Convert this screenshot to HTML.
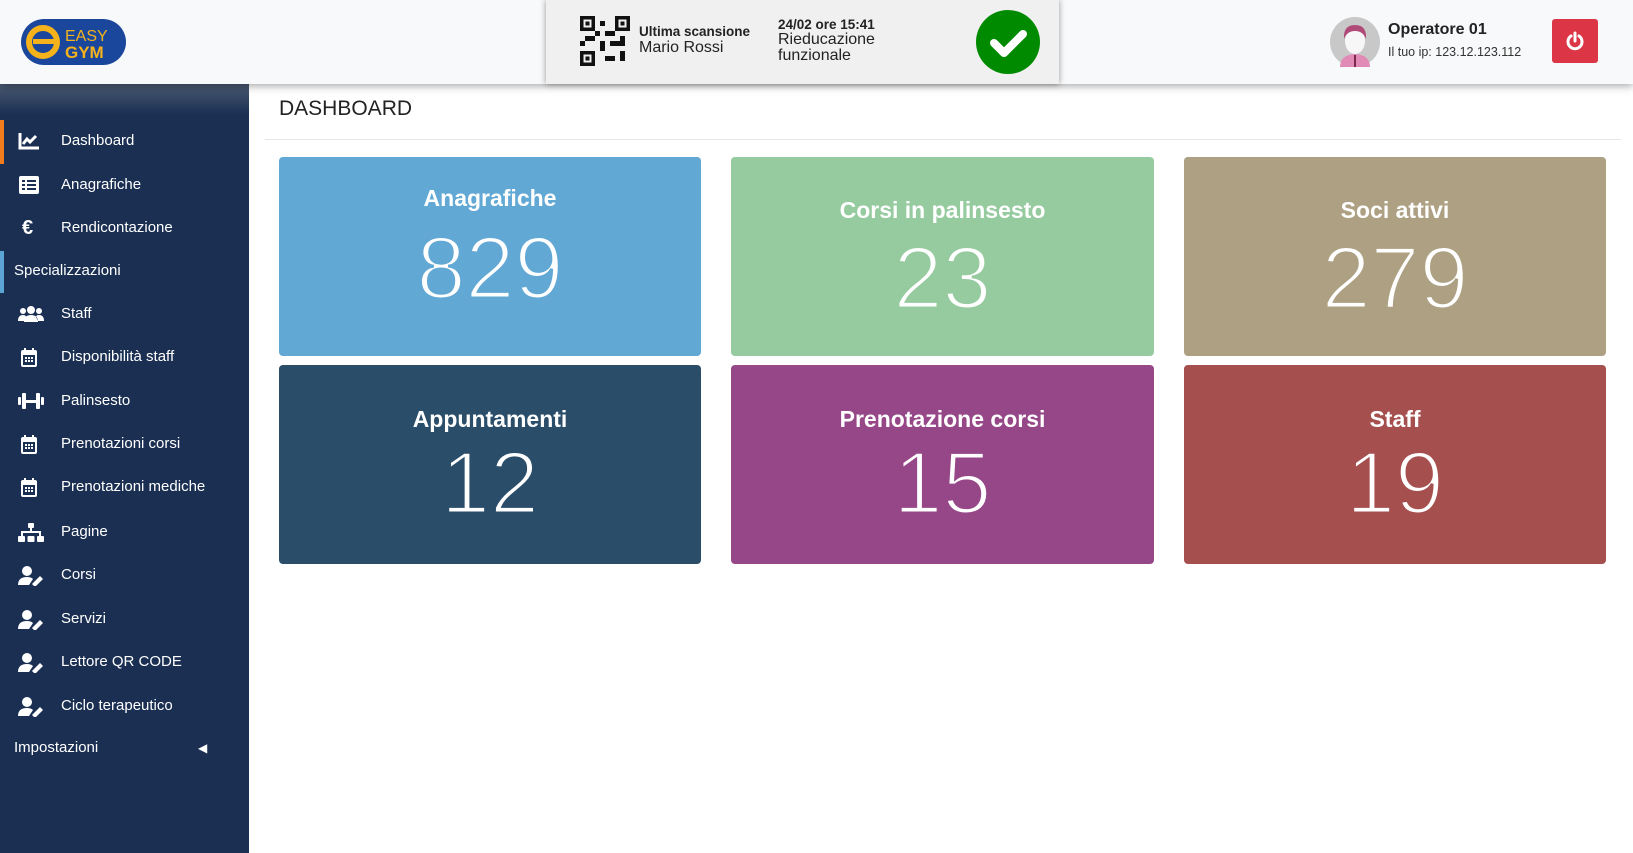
<!DOCTYPE html>
<html><head><meta charset="utf-8"><style>
*{margin:0;padding:0;box-sizing:border-box}
body{width:1633px;height:853px;overflow:hidden;background:#fff;font-family:"Liberation Sans",sans-serif;position:relative}
.hdr{position:absolute;left:0;top:0;width:1633px;height:84px;background:#f8f9fb;box-shadow:0 2px 8px rgba(0,0,0,.35);z-index:3}
.side{position:absolute;left:0;top:84px;width:249px;height:769px;background:#1a2f52;z-index:1}
.side .sh{position:absolute;left:0;top:0;width:249px;height:30px;background:linear-gradient(#4a5a72,rgba(26,47,82,0))}
.it{position:absolute;left:0;height:40px;width:249px;color:#fff;font-size:15px;line-height:40px}
.it span{position:absolute;left:61px}
.it svg{position:absolute;left:18px;top:11px}
.card{position:absolute;border-radius:4px;color:#fff;text-align:center}
.card .t{position:absolute;left:0;right:0;font-weight:bold;font-size:23px}
.card .n{position:absolute;left:0;right:0;font-size:88px;line-height:86px;color:#fff;-webkit-text-stroke:3px var(--bg)}
</style></head><body>
<div class="hdr">
 <svg style="position:absolute;left:21px;top:19px" width="105" height="46" viewBox="0 0 105 46">
  <rect x="0" y="0" width="105" height="46" rx="23" fill="#1a479b"/>
  <circle cx="22" cy="23" r="14" fill="none" stroke="#f5b21b" stroke-width="6"/>
  <rect x="12" y="20" width="22" height="5" fill="#f5b21b"/>
  <text x="44" y="22" fill="#f5b21b" font-size="16" font-family="Liberation Sans">EASY</text>
  <text x="44" y="39" fill="#f5b21b" font-size="17" font-weight="bold" font-family="Liberation Sans">GYM</text>
 </svg>
 <div style="position:absolute;left:546px;top:0;width:513px;height:84px;background:#f0f0f0;box-shadow:0 0 6px rgba(0,0,0,.4)">
  <svg style="position:absolute;left:34px;top:16px" width="50" height="50" viewBox="0 0 10 10">
   <g fill="#111"><rect x="0" y="0" width="3" height="3"/><rect x="7" y="0" width="3" height="3"/><rect x="0" y="7" width="3" height="3"/>
   <rect x="4" y="1" width="1" height="1"/><rect x="5" y="3" width="2" height="1"/><rect x="1" y="4" width="2" height="1"/><rect x="4" y="5" width="1" height="2"/><rect x="6" y="5" width="2" height="1"/><rect x="8" y="4" width="1" height="2"/><rect x="5" y="8" width="2" height="1"/><rect x="8" y="7" width="1" height="2"/><rect x="0" y="5" width="1" height="1"/><rect x="3" y="3" width="1" height="1"/></g>
   <g fill="#f0f0f0"><rect x=".7" y=".7" width="1.6" height="1.6"/><rect x="7.7" y=".7" width="1.6" height="1.6"/><rect x=".7" y="7.7" width="1.6" height="1.6"/></g>
   <g fill="#111"><rect x="1.1" y="1.1" width=".8" height=".8"/><rect x="8.1" y="1.1" width=".8" height=".8"/><rect x="1.1" y="8.1" width=".8" height=".8"/></g>
  </svg>
  <div style="position:absolute;left:93px;top:24px;font-size:13.5px;font-weight:bold;color:#222">Ultima scansione</div>
  <div style="position:absolute;left:93px;top:39px;font-size:16px;color:#222">Mario Rossi</div>
  <div style="position:absolute;left:232px;top:17px;font-size:13.5px;font-weight:bold;color:#222">24/02 ore 15:41</div>
  <div style="position:absolute;left:232px;top:32px;font-size:16px;line-height:16px;color:#222">Rieducazione<br>funzionale</div>
  <svg style="position:absolute;left:430px;top:10px" width="64" height="64" viewBox="0 0 64 64"><circle cx="32" cy="32" r="32" fill="#008a00"/><path d="M18 33 L28 43 L47 24" fill="none" stroke="#fff" stroke-width="8" stroke-linecap="round" stroke-linejoin="round"/></svg>
 </div>
 <svg style="position:absolute;left:1330px;top:17px" width="50" height="50" viewBox="0 0 50 50">
  <circle cx="25" cy="25" r="25" fill="#c8c8c8"/>
  <path d="M10 50 Q10 38 25 37 Q40 38 40 50Z" fill="#e08ab5"/>
  <ellipse cx="25" cy="24" rx="10" ry="13" fill="#f7f7f7"/>
  <path d="M14 22 Q13 8 25 8 Q37 8 36 22 Q33 14 25 14 Q17 14 14 22Z" fill="#b04a78"/>
  <rect x="24" y="38" width="2" height="12" fill="#7a2a4a"/>
 </svg>
 <div style="position:absolute;left:1388px;top:21px;font-size:16px;font-weight:bold;color:#222">Operatore 01</div>
 <div style="position:absolute;left:1388px;top:45px;font-size:12.5px;color:#333">Il tuo ip: 123.12.123.112</div>
 <div style="position:absolute;left:1552px;top:19px;width:46px;height:44px;background:#dc3545;border-radius:3px">
  <svg style="position:absolute;left:13px;top:12px" width="20" height="20" viewBox="0 0 20 20"><path d="M6 5 A7 7 0 1 0 14 5" fill="none" stroke="#fff" stroke-width="3" stroke-linecap="round"/><line x1="10" y1="2" x2="10" y2="10" stroke="#fff" stroke-width="3" stroke-linecap="round"/></svg>
 </div>
</div>
<div class="side"><div class="sh"></div></div>
<div style="position:absolute;left:0;top:120px;width:4px;height:44px;background:#f07c1c;z-index:2"></div>
<div style="position:absolute;left:0;top:251px;width:4px;height:42px;background:#5ba4d4;z-index:2"></div>
<div style="position:absolute;left:0;top:0;z-index:2">
 <div class="it" style="top:121px"><svg width="22" height="18" viewBox="0 0 22 18"><path d="M2 1V16H21" fill="none" stroke="#fff" stroke-width="3"/><path d="M5 12L9 7 12 10 18 4" fill="none" stroke="#fff" stroke-width="3"/></svg><span>Dashboard</span></div>
 <div class="it" style="top:165px"><svg width="22" height="18" viewBox="0 0 22 18"><rect x="1" y="0" width="20" height="18" rx="2" fill="#fff"/><g fill="#1a2f52"><rect x="4" y="4" width="3" height="2"/><rect x="9" y="4" width="9" height="2"/><rect x="4" y="8" width="3" height="2"/><rect x="9" y="8" width="9" height="2"/><rect x="4" y="12" width="3" height="2"/><rect x="9" y="12" width="9" height="2"/></g></svg><span>Anagrafiche</span></div>
 <div class="it" style="top:208px"><span style="left:22px;font-size:20px;font-weight:bold">€</span><span>Rendicontazione</span></div>
 <div class="it" style="top:251px"><span style="left:14px">Specializzazioni</span></div>
 <div class="it" style="top:294px"><svg width="26" height="18" viewBox="0 0 26 18"><circle cx="13" cy="5" r="4" fill="#fff"/><circle cx="5" cy="6" r="3" fill="#fff"/><circle cx="21" cy="6" r="3" fill="#fff"/><path d="M6 17Q6 10 13 10Q20 10 20 17Z M0 16Q0 10 5 10Q8 10 8 12L6 16Z M26 16Q26 10 21 10Q18 10 18 12L20 16Z" fill="#fff"/></svg><span>Staff</span></div>
 <div class="it" style="top:337px"><svg width="22" height="20" viewBox="0 0 22 20"><rect x="3" y="2" width="16" height="17" rx="2" fill="#fff"/><rect x="5" y="7" width="12" height="10" fill="#1a2f52"/><g fill="#fff"><rect x="7" y="9" width="2" height="2"/><rect x="10" y="9" width="2" height="2"/><rect x="13" y="9" width="2" height="2"/><rect x="7" y="12" width="2" height="2"/><rect x="10" y="12" width="2" height="2"/><rect x="13" y="12" width="2" height="2"/><rect x="6" y="0" width="2" height="4"/><rect x="14" y="0" width="2" height="4"/></g></svg><span>Disponibilità staff</span></div>
 <div class="it" style="top:381px"><svg width="26" height="18" viewBox="0 0 26 18"><g fill="#fff"><rect x="0" y="5" width="3" height="8" rx="1"/><rect x="4" y="1" width="4" height="16" rx="1"/><rect x="8" y="8" width="10" height="3"/><rect x="18" y="1" width="4" height="16" rx="1"/><rect x="23" y="5" width="3" height="8" rx="1"/></g></svg><span>Palinsesto</span></div>
 <div class="it" style="top:424px"><svg width="22" height="20" viewBox="0 0 22 20"><rect x="3" y="2" width="16" height="17" rx="2" fill="#fff"/><rect x="5" y="7" width="12" height="10" fill="#1a2f52"/><g fill="#fff"><rect x="7" y="9" width="2" height="2"/><rect x="10" y="9" width="2" height="2"/><rect x="13" y="9" width="2" height="2"/><rect x="7" y="12" width="2" height="2"/><rect x="10" y="12" width="2" height="2"/><rect x="13" y="12" width="2" height="2"/><rect x="6" y="0" width="2" height="4"/><rect x="14" y="0" width="2" height="4"/></g></svg><span>Prenotazioni corsi</span></div>
 <div class="it" style="top:467px"><svg width="22" height="20" viewBox="0 0 22 20"><rect x="3" y="2" width="16" height="17" rx="2" fill="#fff"/><rect x="5" y="7" width="12" height="10" fill="#1a2f52"/><g fill="#fff"><rect x="7" y="9" width="2" height="2"/><rect x="10" y="9" width="2" height="2"/><rect x="13" y="9" width="2" height="2"/><rect x="7" y="12" width="2" height="2"/><rect x="10" y="12" width="2" height="2"/><rect x="13" y="12" width="2" height="2"/><rect x="6" y="0" width="2" height="4"/><rect x="14" y="0" width="2" height="4"/></g></svg><span>Prenotazioni mediche</span></div>
 <div class="it" style="top:512px"><svg width="26" height="20" viewBox="0 0 26 20"><g fill="#fff"><rect x="10" y="0" width="6" height="5" rx="1"/><rect x="12" y="5" width="2" height="4"/><rect x="3" y="8" width="20" height="2"/><rect x="3" y="8" width="2" height="5"/><rect x="21" y="8" width="2" height="5"/><rect x="0" y="13" width="7" height="6" rx="1"/><rect x="9.5" y="13" width="7" height="6" rx="1"/><rect x="19" y="13" width="7" height="6" rx="1"/></g></svg><span>Pagine</span></div>
 <div class="it" style="top:555px"><svg width="26" height="20" viewBox="0 0 26 20"><circle cx="9" cy="5" r="5" fill="#fff"/><path d="M0 19Q0 11 9 11Q13 11 15 13L11 19Z" fill="#fff"/><path d="M14 18L22 10 25 13 17 21Z" fill="#fff"/></svg><span>Corsi</span></div>
 <div class="it" style="top:599px"><svg width="26" height="20" viewBox="0 0 26 20"><circle cx="9" cy="5" r="5" fill="#fff"/><path d="M0 19Q0 11 9 11Q13 11 15 13L11 19Z" fill="#fff"/><path d="M14 18L22 10 25 13 17 21Z" fill="#fff"/></svg><span>Servizi</span></div>
 <div class="it" style="top:642px"><svg width="26" height="20" viewBox="0 0 26 20"><circle cx="9" cy="5" r="5" fill="#fff"/><path d="M0 19Q0 11 9 11Q13 11 15 13L11 19Z" fill="#fff"/><path d="M14 18L22 10 25 13 17 21Z" fill="#fff"/></svg><span>Lettore QR CODE</span></div>
 <div class="it" style="top:686px"><svg width="26" height="20" viewBox="0 0 26 20"><circle cx="9" cy="5" r="5" fill="#fff"/><path d="M0 19Q0 11 9 11Q13 11 15 13L11 19Z" fill="#fff"/><path d="M14 18L22 10 25 13 17 21Z" fill="#fff"/></svg><span>Ciclo terapeutico</span></div>
 <div class="it" style="top:728px"><span style="left:14px">Impostazioni</span><span style="left:198px;font-size:12px">◀</span></div>
</div>
<div style="position:absolute;left:279px;top:97px;font-size:21px;color:#222">DASHBOARD</div>
<div style="position:absolute;left:265px;top:139px;width:1356px;height:1px;background:#e6e6e6"></div>

<div class="card" style="left:279px;top:157px;width:422px;height:199px;background:#62a8d4;--bg:#62a8d4"><div class="t" style="top:28px">Anagrafiche</div><div class="n" style="top:68px">829</div></div>
<div class="card" style="left:731px;top:157px;width:423px;height:199px;background:#96cba0;--bg:#96cba0"><div class="t" style="top:40px">Corsi in palinsesto</div><div class="n" style="top:78px">23</div></div>
<div class="card" style="left:1184px;top:157px;width:422px;height:199px;background:#ada083;--bg:#ada083"><div class="t" style="top:40px">Soci attivi</div><div class="n" style="top:78px">279</div></div>
<div class="card" style="left:279px;top:365px;width:422px;height:199px;background:#2a4d6a;--bg:#2a4d6a"><div class="t" style="top:41px">Appuntamenti</div><div class="n" style="top:75px">12</div></div>
<div class="card" style="left:731px;top:365px;width:423px;height:199px;background:#964787;--bg:#964787"><div class="t" style="top:41px">Prenotazione corsi</div><div class="n" style="top:75px">15</div></div>
<div class="card" style="left:1184px;top:365px;width:422px;height:199px;background:#a64f4f;--bg:#a64f4f"><div class="t" style="top:41px">Staff</div><div class="n" style="top:75px">19</div></div>
</body></html>
